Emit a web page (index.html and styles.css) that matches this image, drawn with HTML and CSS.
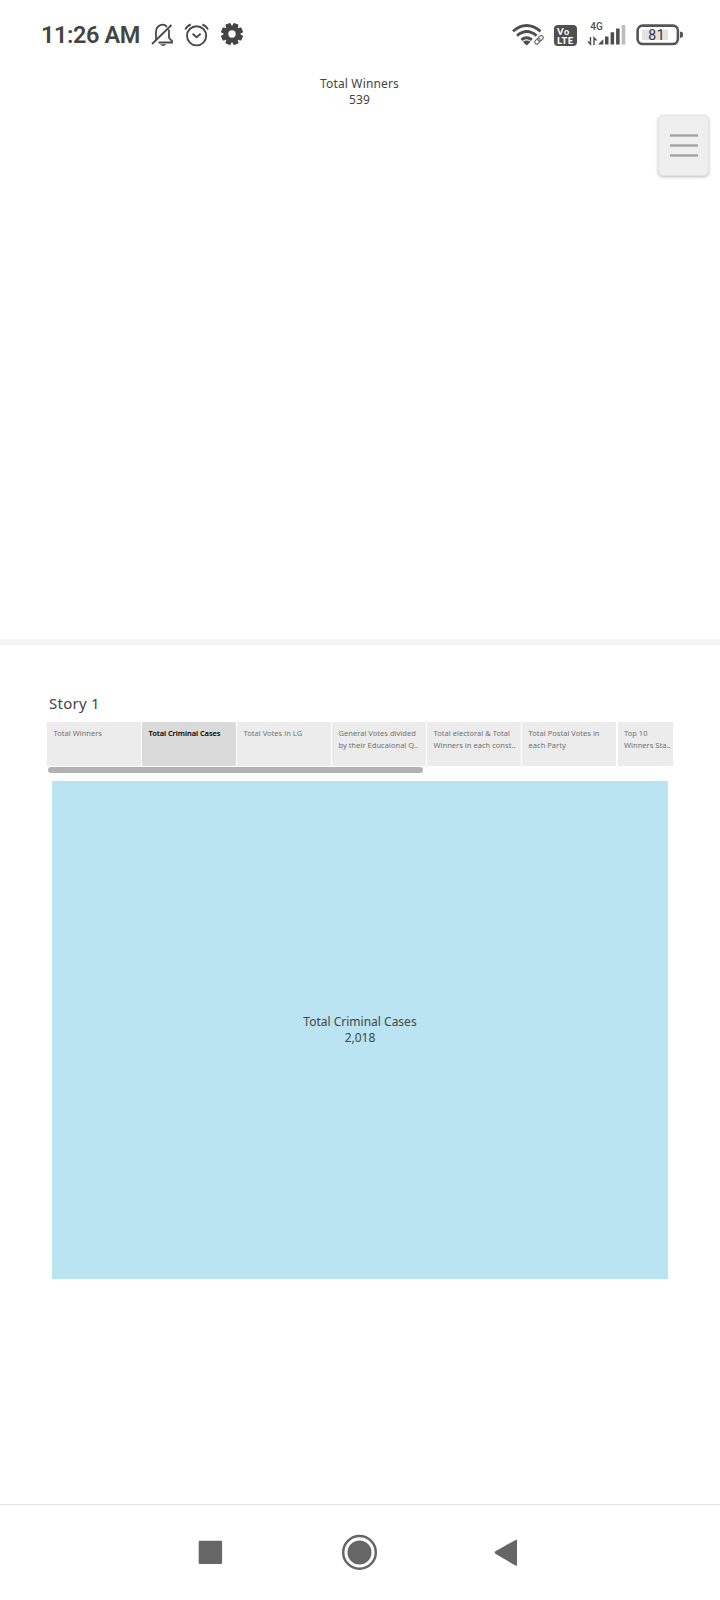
FILE: index.html
```html
<!DOCTYPE html>
<html lang="en">
<head>
<meta charset="utf-8">
<title>Story 1</title>
<link rel="stylesheet" href="styles.css">
</head>
<body>
<header class="status">
  <span class="clock">11:26 AM</span>
  <svg class="bell" width="24" height="26" viewBox="150 22 24 26" fill="none" stroke="#4a4a4a" stroke-width="1.8">
    <path d="M156 40V32a6.500 7.200 0 0 1 11-5.200M169 29.500V38l3 3v1.500H158.500"/>
    <path d="M171.500 25 152 44"/><path d="M160 44.200h6.500q-3.200 3.400-6.500 0z" fill="#4a4a4a" stroke="none"/>
  </svg>
  <svg class="alarm" width="26" height="26" viewBox="184 22 26 26" fill="none" stroke="#4a4a4a" stroke-width="1.900">
    <circle cx="196.600" cy="35.800" r="9.600"/><path d="M185.300 29.500q1.500-3.500 5.500-5M207.900 29.500q-1.500-3.500-5.500-5"/><path d="m192.600 33.800 4 3.500 4-3.500"/>
  </svg>
  <svg class="gear" width="24" height="26" viewBox="220 21 24 26">
    <g fill="#444"><circle cx="232" cy="34" r="8.600"/>
      <rect x="229.200" y="22.900" width="5.600" height="22.200" rx="1.200" transform="rotate(22.500 232 34)"/><rect x="229.200" y="22.900" width="5.600" height="22.200" rx="1.200" transform="rotate(67.500 232 34)"/><rect x="229.200" y="22.900" width="5.600" height="22.200" rx="1.200" transform="rotate(112.500 232 34)"/><rect x="229.200" y="22.900" width="5.600" height="22.200" rx="1.200" transform="rotate(157.500 232 34)"/></g>
    <circle cx="232" cy="34" r="3.700" fill="#fff"/>
  </svg>
  <svg class="wifi" width="34" height="24" viewBox="511 23 34 24" fill="none" stroke="#4d4d4d" stroke-width="2.800">
    <path d="M513 31.300q13.500-11.500 27.500 0M517 35.700q9.700-8.300 19.500 0M521.300 39.800q5.200-4.200 10.600 0"/>
    <path d="m522.800 41.800 3.900 3.600 3.900-3.600q-3.900-2.600-7.800 0z" fill="#4d4d4d" stroke="none"/>
    <g transform="rotate(-45 539 39.800)"><rect x="533.800" y="37.800" width="6.500" height="4" rx="2" stroke="#fff" stroke-width="3.400"/><rect x="533.800" y="37.800" width="6.200" height="4" rx="2" stroke="#707070" stroke-width="1.200"/><rect x="538" y="37.800" width="6.200" height="4" rx="2" stroke="#707070" stroke-width="1.200"/></g>
  </svg>
  <span class="volte"><b>V<small>o</small></b><b>LTE</b></span>
  <svg class="signal" width="40" height="25" viewBox="587 21 40 25" fill="#4d4d4d">
    <text class="net" x="590.300" y="30">4G</text>
    <path d="M590.500 37v7.200l-2.500-2.700M594 45v-7.200l2.500 2.700" fill="none" stroke="#4d4d4d" stroke-width="1.400"/>
    <path d="M598 44.600 603.300 39.300V44.600zM605 36.500h3.500v8.100H605zM610.600 32.300h3.500v12.300h-3.500zM616.100 28.500h3.500v16.100h-3.500z"/><path d="M621.700 25h3.600v19.600h-3.600z" fill="#bdbdbd"/>
  </svg>
  <svg class="battery" width="48" height="24" viewBox="636 23 48 24">
    <rect x="637.600" y="25.600" width="40.300" height="18.400" rx="5" fill="#fff" stroke="#555" stroke-width="2.600"/>
    <rect x="642" y="29.700" width="26" height="10.300" rx="1" fill="#e2e2e2"/>
    <path d="M680 31.800h1q2 0 2 2v2q0 2-2 2h-1z" fill="#555"/><text class="charge" x="648.300" y="39.900">81</text>
  </svg>
</header>

<section class="view">
  <div class="winners">Total Winners<br>539</div>
  <button class="menu" aria-label="Menu"><i></i><i></i><i></i></button>
</section>

<main class="story">
  <h1>Story 1</h1>
  <nav class="tabs">
    <div class="tab"><span>Total Winners</span></div>
    <div class="tab active"><span>Total Criminal Cases</span></div>
    <div class="tab"><span>Total Votes in LG</span></div>
    <div class="tab"><span>General Votes divided</span><span>by their Educaional Q..</span></div>
    <div class="tab"><span>Total electoral &amp; Total</span><span>Winners in each const..</span></div>
    <div class="tab"><span>Total Postal Votes in</span><span>each Party</span></div>
    <div class="tab last"><span>Top 10</span><span>Winners Sta..</span></div>
  </nav>
  <div class="scroll"></div>
  <div class="cases"><div>Total Criminal Cases<br>2,018</div></div>
</main>

<footer class="system">
  <svg width="720" height="95" viewBox="0 1505 720 95" fill="#666">
    <rect x="198.700" y="1540.700" width="23.400" height="23.300" rx="1.200"/>
    <circle cx="359.500" cy="1552.400" r="16.300" fill="none" stroke="#666" stroke-width="2.500"/><circle cx="359.500" cy="1552.400" r="12"/>
    <path d="M495.400 1551.300 515.500 1540q1.500-.7 1.500 1v23.600q0 1.700-1.500 1L495.400 1553.700q-1.400-1.200 0-2.400z"/>
  </svg>
</footer>
</body>
</html>
```
FILE: styles.css
```css
* { box-sizing: border-box; }
body { margin: 0; width: 720px; height: 1600px; display: flex; flex-direction: column; overflow: hidden; background: #fff; color: #444; font-family: "Noto Sans", sans-serif; }
svg { display: block; flex: none; }
.status { height: 70px; flex: none; padding: 0 36px 0 41px; display: flex; align-items: flex-start; }
.clock { width: 109px; padding-top: 21px; font: 600 23.500px/28px Roboto, sans-serif; letter-spacing: -.4px; color: #444; white-space: nowrap; }
.bell { margin-top: 22px; }
.alarm { margin: 22px 0 0 10px; }
.gear { margin: 21px 0 0 10px; }
.wifi { margin: 23px 0 0 auto; }
.volte { display: flex; flex-direction: column; width: 23px; height: 21px; margin: 25px 0 0 9px; padding-top: 1.500px; border-radius: 4px; background: #505050; color: #fff; font: 900 9.500px/9px Lato, sans-serif; letter-spacing: .4px; }
.volte b { display: block; height: 9px; padding-left: 3px; font-weight: 900; }
.volte small { font-size: 9px; }
.signal { margin: 21px 0 0 10px; }
.net { font: 500 10px Roboto, sans-serif; }
.battery { margin: 23px 0 0 9px; }
.charge { font: 400 14px Roboto, sans-serif; fill: #333; letter-spacing: .5px; }
.view { height: 575px; flex: none; display: grid; grid-template-columns: 658px 51px; border-bottom: 6px solid #f5f5f5; }
.winners { padding: 6px 0 0 61px; text-align: center; font-size: 12px; line-height: 16px; letter-spacing: .15px; }
.menu { width: 51px; height: 61px; margin: 45px 0 0; padding: 0 10px 0 11px; display: flex; flex-direction: column; justify-content: center; gap: 7px; border: 1px solid #e4e4e4; border-radius: 5px; background: #efefef; box-shadow: 0 1px 3px #0004; }
.menu i { display: block; height: 3px; background: linear-gradient(#bcbcbc 33%, #a0a0a0 33% 66%, #bcbcbc 66%); }
.story { height: 860px; flex: none; padding: 47px 47px 0; border-bottom: 1px solid #e2e2e2; }
h1 { margin: 0 0 0 2px; height: 30px; font-size: 15px; line-height: 22px; font-weight: 400; letter-spacing: .25px; }
.tabs { height: 44px; display: flex; gap: 1px; }
.tab { width: 94px; flex: none; padding: 5px 0 0 6.500px; background: #ececec; color: #707070; font-size: 7.500px; line-height: 12px; letter-spacing: .03px; white-space: nowrap; }
.tab span { display: block; }
.tab.active { background: #dadada; color: #000; font-weight: 600; letter-spacing: -.08px; }
.tab.last { width: 55px; margin-left: 1px; padding-left: 6px; }
.scroll { width: 375px; height: 6px; margin: 1px 0 0 .5px; border-radius: 3px; background: #b1b1b1; }
.cases { height: 498px; margin: 8px 5px 0; display: grid; place-items: center; background: #bae4f1; text-align: center; font-size: 12px; line-height: 16px; }
```
